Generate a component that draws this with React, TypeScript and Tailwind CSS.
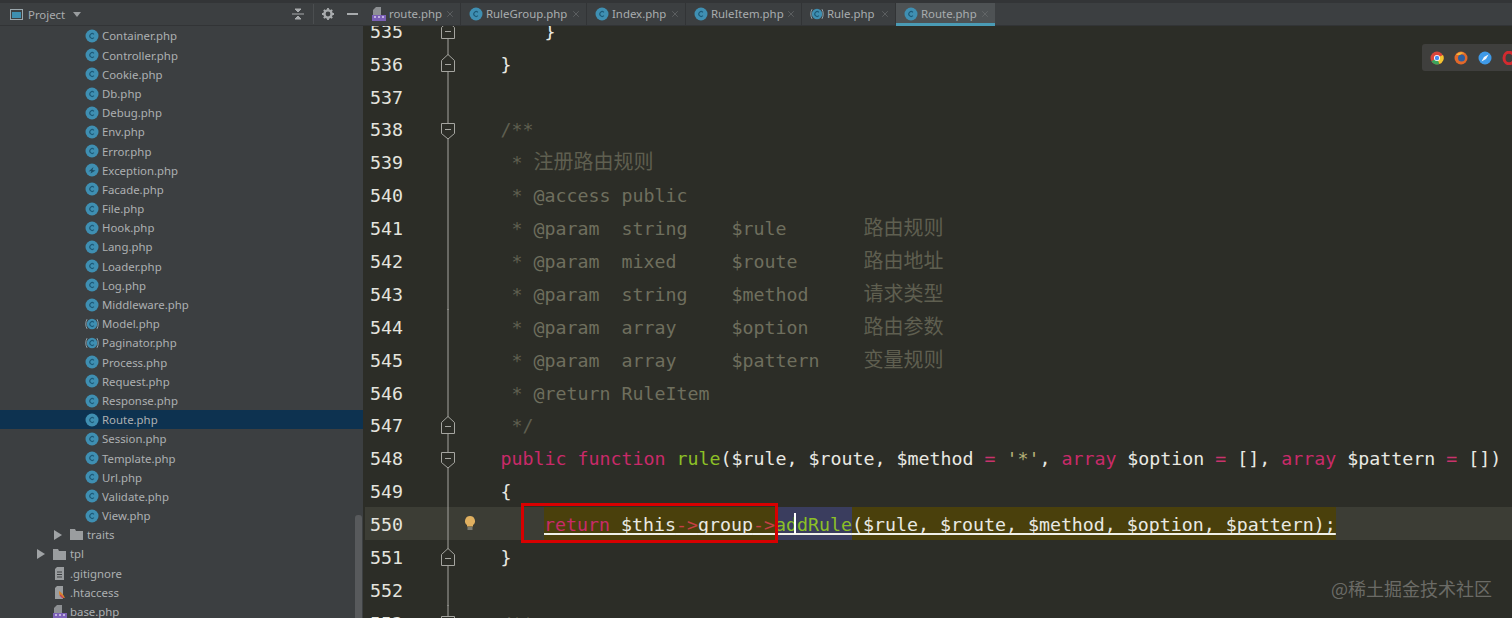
import React from "react";
import { X } from "lucide-react";

const CJK = "font-['Noto_Sans_CJK_SC',sans-serif] text-[20px] leading-[0]";

function ClassIcon({ kind = "c" }: { kind?: "c" | "a" | "e" }) {
  return (
    <svg width="14" height="14" viewBox="0 0 14 14" className="shrink-0">
      {kind === "a" ? (
        <>
          <circle cx="7" cy="7" r="5.2" fill="#3f8fb2" />
          <path d="M2 2.2C.4 5 .4 9 2 11.8M12 2.2c1.600 2.800 1.600 6.800 0 9.600" stroke="#8fa3ad" strokeWidth="1" fill="none" />
        </>
      ) : (
        <circle cx="7" cy="7" r="6.5" fill="#3f8fb2" />
      )}
      {kind === "e" ? (
        <path d="M3.500 8.500L8.500 4l-1 3 3 .5-5 3 .8-2.400z" fill="#1d4f68" />
      ) : (
        <path d="M8.900 5.300a2.400 2.400 0 1 0 0 3.400" stroke="#1d5a78" strokeWidth="1.100" fill="none" />
      )}
    </svg>
  );
}

function PhpIcon() {
  return (
    <svg width="14" height="14" viewBox="0 0 14 14" className="shrink-0">
      <path d="M4 0h5v8H1V3z" fill="#8d9093" />
      <rect x="0" y="8" width="14" height="6" fill="#7a5fb5" />
      <path d="M2 10h2M6 10h2M10 10h2" stroke="#d7ccee" strokeWidth="1.400" />
    </svg>
  );
}

function FolderIcon() {
  return (
    <svg width="13" height="11" viewBox="0 0 13 11" className="shrink-0">
      <path d="M0 0h5l1 2h7v9H0z" fill="#9a9d9f" />
    </svg>
  );
}

function Arrow() {
  return (
    <svg width="8" height="10" viewBox="0 0 8 10" className="shrink-0">
      <path d="M0 0l8 5-8 5z" fill="#a0a3a5" />
    </svg>
  );
}

function FileIcon() {
  return (
    <svg width="11" height="13" viewBox="0 0 11 13" className="shrink-0">
      <path d="M3 0h7v13H1V2z" fill="#9a9d9f" />
      <path d="M3 5h5M3 7.500h5M3 10h5" stroke="#3c3f41" strokeWidth="1" />
    </svg>
  );
}

function HtaIcon() {
  return (
    <svg width="12" height="13" viewBox="0 0 12 13" className="shrink-0">
      <path d="M3 0h6v13H1V2z" fill="#9a9d9f" />
      <path d="M5 5c2 1 4 3 6 7-3 0-5-2-6-4z" fill="#d9822b" />
      <path d="M6 9l3 3" stroke="#c23b5a" strokeWidth="1.200" />
    </svg>
  );
}

type Row = { name: string; kind?: "c" | "a" | "e"; selected?: boolean };
const classes: Row[] = [
  { name: "Container.php" },
  { name: "Controller.php" },
  { name: "Cookie.php" },
  { name: "Db.php" },
  { name: "Debug.php" },
  { name: "Env.php" },
  { name: "Error.php" },
  { name: "Exception.php", kind: "e" },
  { name: "Facade.php" },
  { name: "File.php" },
  { name: "Hook.php" },
  { name: "Lang.php" },
  { name: "Loader.php" },
  { name: "Log.php" },
  { name: "Middleware.php" },
  { name: "Model.php", kind: "a" },
  { name: "Paginator.php", kind: "a" },
  { name: "Process.php" },
  { name: "Request.php" },
  { name: "Response.php" },
  { name: "Route.php", selected: true },
  { name: "Session.php" },
  { name: "Template.php" },
  { name: "Url.php" },
  { name: "Validate.php" },
  { name: "View.php" },
];

function Sidebar() {
  const row = "h-[19.2px] flex items-center shrink-0";
  return (
    <aside className="relative w-[363px] shrink-0 h-full bg-[#3c3f41] flex flex-col overflow-hidden text-[11.4px] text-[#adb0b2] font-['Noto_Sans',sans-serif]">
      <div className="h-[3px] bg-[#333537] shrink-0" />
      <div className="h-[23.4px] shrink-0 flex items-center pl-[10px] border-b border-[#323436]">
        <svg width="13" height="11" viewBox="0 0 13 11">
          <rect x="0.5" y="0.5" width="12" height="10" fill="none" stroke="#9aa7ad" />
          <rect x="2" y="3" width="9" height="6" fill="#3e8fb0" />
        </svg>
        <span className="ml-[5px] text-[#a9acae]">Project</span>
        <svg width="8" height="5" viewBox="0 0 8 5" className="ml-[8px]">
          <path d="M0 0h8L4 5z" fill="#9a9d9f" />
        </svg>
        <svg width="12" height="12" viewBox="0 0 12 12" className="ml-[211px]">
          <path d="M0 6h12M3 1h6L6 4zM3 11h6L6 8z" stroke="#a8abad" strokeWidth="1" fill="#a8abad" />
        </svg>
        <div className="w-px h-[20px] bg-[#4b4e50] ml-[9px]" />
        <svg width="12" height="12" viewBox="0 0 12 12" className="ml-[8px]">
          <circle cx="6" cy="6" r="3.600" fill="none" stroke="#a8abad" strokeWidth="2.400" />
          <path d="M6 0v2.400M6 9.600V12M0 6h2.400M9.600 6H12M1.800 1.800l1.700 1.700M8.500 8.500l1.700 1.700M1.800 10.200l1.700-1.700M8.500 3.500l1.700-1.700" stroke="#a8abad" strokeWidth="1.800" />
        </svg>
        <div className="w-[11px] h-[2px] bg-[#a8abad] ml-[13px]" />
      </div>
      {classes.map((r) => (
        <div
          key={r.name}
          className={`${row} pl-[85px] gap-[3px] ${r.selected ? "bg-[#0d3250]" : ""}`}
        >
          <ClassIcon kind={r.kind} />
          <span>{r.name}</span>
        </div>
      ))}
      <div className={`${row} pl-[54px]`}>
        <Arrow />
        <span className="ml-[8px]"><FolderIcon /></span>
        <span className="ml-[4px]">traits</span>
      </div>
      <div className={`${row} pl-[37px]`}>
        <Arrow />
        <span className="ml-[8px]"><FolderIcon /></span>
        <span className="ml-[4px]">tpl</span>
      </div>
      <div className={`${row} pl-[54px]`}>
        <FileIcon />
        <span className="ml-[5px]">.gitignore</span>
      </div>
      <div className={`${row} pl-[54px]`}>
        <HtaIcon />
        <span className="ml-[4px]">.htaccess</span>
      </div>
      <div className={`${row} pl-[53px]`}>
        <PhpIcon />
        <span className="ml-[3px]">base.php</span>
      </div>
      <div className="absolute right-[1px] bottom-0 top-[515px] w-[7px] bg-[#585a5c] rounded-t-[3px]" />
    </aside>
  );
}

type Tab = { name: string; w: string; icon: "php" | "c" | "a"; active?: boolean };
const tabs: Tab[] = [
  { name: "route.php", w: "w-[97px]", icon: "php" },
  { name: "RuleGroup.php", w: "w-[126px]", icon: "c" },
  { name: "Index.php", w: "w-[99px]", icon: "c" },
  { name: "RuleItem.php", w: "w-[116px]", icon: "c" },
  { name: "Rule.php", w: "w-[94px]", icon: "a" },
  { name: "Route.php", w: "w-[99px]", icon: "c", active: true },
];

function TabBar() {
  return (
    <div className="shrink-0 relative z-10 flex flex-col font-['Noto_Sans',sans-serif] text-[11.4px]">
      <div className="h-[3px] bg-[#333537]" />
      <div className="h-[23px] bg-[#3c3f41] flex pl-[1px] border-b border-[#323436]">
        {tabs.map((t) => (
          <div
            key={t.name}
            className={`${t.w} relative flex items-center pl-[8px] gap-[3px] border-r border-[#323436] ${
              t.active ? "bg-[#4e5254] border-r-0" : ""
            }`}
          >
            {t.icon === "php" ? <PhpIcon /> : <ClassIcon kind={t.icon === "a" ? "a" : "c"} />}
            <span className="text-[#a9adaf]">{t.name}</span>
            <X size={10} strokeWidth={1.500} className="absolute right-[5px] top-[6px] text-[#6f7274]" />
            {t.active && <div className="absolute left-0 right-0 bottom-[-1px] h-[3px] bg-[#4a9bb5]" />}
          </div>
        ))}
      </div>
    </div>
  );
}

const T = ({ c, children }: { c: string; children: React.ReactNode }) => <span className={c}>{children}</span>;

const cm = "text-[#5f5f50]";
const tag = "text-[#6f6f5e]";
const kw = "text-[#c92a69]";
const fn = "text-[#8cc026]";
const op = "text-[#c9336c]";
const tx = "text-[#e9e9e3]";

function doc(typ: string, name: string, pad: string, zh: string) {
  return (
    <T c={tag}>
      <T c={cm}>{" * "}</T>@param{"  "}{typ}{name}{pad}
      <span className={CJK + " " + cm}>{zh}</span>
    </T>
  );
}

type Line = { n: number; code?: React.ReactNode; mark?: "start" | "end" };
const lines: Line[] = [
  { n: 535, code: <T c={tx}>{"    }"}</T>, mark: "end" },
  { n: 536, code: <T c={tx}>{"}"}</T>, mark: "end" },
  { n: 537 },
  { n: 538, code: <T c={cm}>{"/**"}</T>, mark: "start" },
  { n: 539, code: <T c={cm}>{" * "}<span className={CJK}>注册路由规则</span></T> },
  { n: 540, code: <T c={tag}><T c={cm}>{" * "}</T>@access public</T> },
  { n: 541, code: doc("string    ", "$rule", "       ", "路由规则") },
  { n: 542, code: doc("mixed     ", "$route", "      ", "路由地址") },
  { n: 543, code: doc("string    ", "$method", "     ", "请求类型") },
  { n: 544, code: doc("array     ", "$option", "     ", "路由参数") },
  { n: 545, code: doc("array     ", "$pattern", "    ", "变量规则") },
  { n: 546, code: <T c={tag}><T c={cm}>{" * "}</T>@return RuleItem</T> },
  { n: 547, code: <T c={cm}>{" */"}</T>, mark: "end" },
  {
    n: 548,
    mark: "start",
    code: (
      <T c={tx}>
        <T c={kw}>public function </T>
        <T c={fn}>rule</T>($rule, $route, $method <T c={op}>=</T> <T c="text-[#b5b078]">'*'</T>, <T c={kw}>array</T> $option{" "}
        <T c={op}>=</T> [], <T c={kw}>array</T> $pattern <T c={op}>=</T> [])
      </T>
    ),
  },
  { n: 549, code: <T c={tx}>{"{"}</T> },
  { n: 550 },
  { n: 551, code: <T c={tx}>{"}"}</T>, mark: "end" },
  { n: 552 },
  { n: 553, code: <T c={cm}>{"/**"}</T>, mark: "start" },
];

function Fold({ mark }: { mark?: "start" | "end" }) {
  return (
    <svg width="16" height="33" viewBox="0 0 16 33" className="shrink-0 block">
      <path d="M8 0v33" stroke="#a5a5a0" strokeWidth="1" />
      {mark === "start" && (
        <>
          <path d="M1.500 11.500h13v10l-6.500 5.500-6.500-5.500z" fill="#2c2d27" stroke="#a5a5a0" />
          <path d="M5 17.500h6" stroke="#a5a5a0" />
        </>
      )}
      {mark === "end" && (
        <>
          <path d="M1.500 25.500h13v-11l-6.500-6-6.500 6z" fill="#2c2d27" stroke="#a5a5a0" />
          <path d="M5 18.500h6" stroke="#a5a5a0" />
        </>
      )}
    </svg>
  );
}

function Bulb() {
  return (
    <svg width="12" height="16" viewBox="0 0 12 16">
      <path d="M6 1a5 5 0 0 0-3 9v1.500h6V10a5 5 0 0 0-3-9z" fill="#e0b060" />
      <rect x="3.500" y="12" width="5" height="3" fill="#7a7a70" />
    </svg>
  );
}

const under = "underline decoration-[#f0f0e8] underline-offset-[2px] decoration-[1.5px] [text-decoration-skip-ink:none]";

function ActiveCode() {
  return (
    <span className="inline-flex h-full items-center pl-[43.5px]">
      <span className={`inline-flex items-center h-full pt-[3px] bg-[#4a400c] ${under}`}>
        <span>
          <T c={kw}>return </T>
          <T c={tx}>$this</T>
          <T c="text-[#c43f45]">{"->"}</T>
          <T c={tx}>group</T>
          <T c="text-[#c43f45]">{"->"}</T>
        </span>
      </span>
      <span className={`relative inline-flex items-center h-full pt-[3px] bg-[#3a3d5e] ${under}`}>
        <T c={fn}>addRule</T>
        <span className="absolute left-[19px] top-[6px] bottom-[6px] w-[2px] bg-white" />
      </span>
      <span className={`inline-flex items-center h-full pt-[3px] bg-[#4a400c] text-[#e9e9e3] ${under}`}>
        ($rule, $route, $method, $option, $pattern);
      </span>
    </span>
  );
}

function Editor() {
  return (
    <main className="relative flex-1 min-w-0 h-full bg-[#2c2d27] flex flex-col overflow-hidden">
      <TabBar />
      <div className="flex-1 min-h-0 overflow-hidden pl-[2px] font-['DejaVu_Sans_Mono',monospace] text-[18.27px] whitespace-pre">
        <div className="-mt-[12.5px] flex flex-col">
          {lines.map((l) => (
            <div
              key={l.n}
              className={`h-[32.9px] shrink-0 flex items-center ${l.n === 550 ? "bg-[#3c3d35]" : ""}`}
            >
              <span className="w-[75px] pl-[5px] pt-[3px] shrink-0 text-[#e4e4de]">{l.n}</span>
              <Fold mark={l.mark} />
              <span className="w-[44.5px] shrink-0 pl-[8px] flex items-center">{l.n === 550 && <Bulb />}</span>
              {l.n === 550 ? <ActiveCode /> : <span className="pt-[3px]">{l.code}</span>}
            </div>
          ))}
        </div>
      </div>

      {/* browser support badge */}
      <div className="absolute left-[1059px] top-[44px] w-[100px] h-[27px] bg-[#3f3f3d] rounded-l-[3px] flex items-center pl-[8px] gap-[10px] overflow-hidden">
        <svg width="14" height="14" viewBox="0 0 14 14" className="shrink-0">
          <circle cx="7" cy="7" r="6.5" fill="#d8453a" />
          <path d="M7 7L1.400 10.300A6.500 6.500 0 0 0 9.500 13z" fill="#3ba55c" />
          <path d="M7 7l2.500 6A6.500 6.500 0 0 0 13 4z" fill="#f3c530" />
          <circle cx="7" cy="7" r="3" fill="#fff" />
          <circle cx="7" cy="7" r="2.200" fill="#4a8cf0" />
        </svg>
        <svg width="14" height="14" viewBox="0 0 14 14" className="shrink-0">
          <circle cx="7" cy="7" r="6.5" fill="#e2682a" />
          <circle cx="7.500" cy="7" r="3.500" fill="#2f5f9e" />
          <path d="M2 4c2-3 6-4 9-1-2-1-4 0-5 1z" fill="#f2b53a" />
        </svg>
        <svg width="14" height="14" viewBox="0 0 14 14" className="shrink-0">
          <circle cx="7" cy="7" r="6.5" fill="#3f9ae8" />
          <path d="M10.500 3.500L8 8 3.500 10.500 6 6z" fill="#f4f7fa" />
        </svg>
        <svg width="14" height="14" viewBox="0 0 14 14" className="shrink-0">
          <ellipse cx="7" cy="7" rx="5" ry="5.800" fill="none" stroke="#d22a2f" strokeWidth="3" />
        </svg>
      </div>

      {/* red annotation box */}
      <div className="absolute left-[158px] top-[503px] w-[257px] h-[40px] border-[3px] border-[#d80000]" />

      {/* watermark */}
      <div className="absolute right-[20px] top-[575px] text-[18px] leading-[26px] text-[#6b6b66] font-['Noto_Sans_CJK_SC',sans-serif]">
        @稀土掘金技术社区
      </div>
    </main>
  );
}

export default function App() {
  return (
    <div className="w-[1512px] h-[618px] flex overflow-hidden bg-[#2c2d27]">
      <Sidebar />
      <Editor />
    </div>
  );
}
